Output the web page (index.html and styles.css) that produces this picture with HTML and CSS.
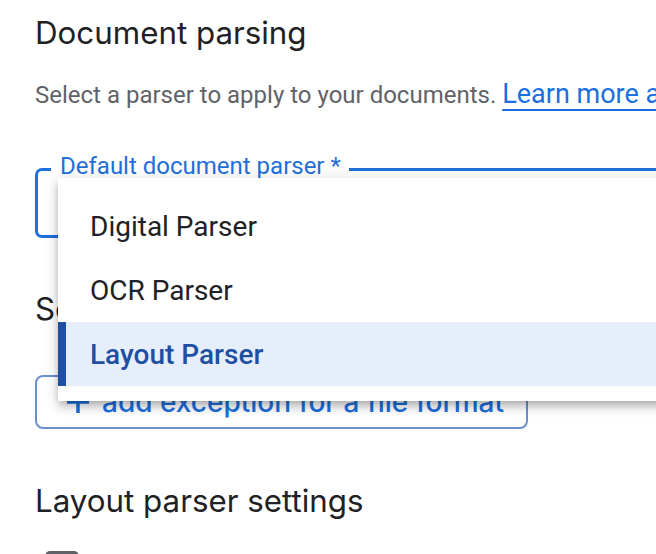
FILE: index.html
```html
<!DOCTYPE html>
<html lang="en">
<head>
<meta charset="utf-8">
<title>Document parsing</title>
<link rel="stylesheet" href="styles.css">
</head>
<body>
<main class="page">
  <h1 class="section-title">Document parsing</h1>
  <p class="desc">Select a parser to apply to your documents. <a class="link" href="#">Learn more about document parsing</a></p>

  <div class="select-wrap">
    <fieldset class="outlined">
      <legend class="float-label">Default document parser *</legend>
      <div class="select-value">Layout Parser</div>
    </fieldset>
    <ul class="menu" role="listbox">
      <li class="option" role="option">Digital Parser</li>
      <li class="option" role="option">OCR Parser</li>
      <li class="option selected" role="option" aria-selected="true">Layout Parser</li>
    </ul>
  </div>

  <h2 class="section-title sub">Set exceptions for file types</h2>
  <button class="add-btn" type="button">
    <svg class="plus" viewBox="0 0 24 24" aria-hidden="true"><path d="M12 1v22M1 12h22"/></svg>
    <span>add exception for a file format</span>
  </button>

  <h2 class="section-title settings">Layout parser settings</h2>
  <label class="check-row"><span class="checkbox"></span><span class="check-text">Include table annotation</span></label>
</main>
</body>
</html>
```
FILE: styles.css
```css
html, body {
  margin: 0;
  padding: 0;
  overflow: hidden;
  background: #ffffff;
}

body {
  font-family: Roboto, "Liberation Sans", sans-serif;
  color: #202124;
}

.page {
  padding: 15px 0 0 35px;
  width: 900px;
}

.section-title {
  margin: 0;
  font-family: Inter, "Open Sans", sans-serif;
  font-weight: 400;
  font-size: 31.3px;
  line-height: 36px;
  color: #202124;
}

.desc {
  margin: 27px 0 0;
  font-size: 24px;
  line-height: 32px;
  color: #5f6368;
  white-space: nowrap;
}

.link {
  font-size: 27px;
  color: #1a6fe0;
  text-decoration: underline;
  text-decoration-thickness: 2px;
  text-underline-offset: 6px;
}

.select-wrap {
  position: relative;
  margin-top: 43px;
}

.outlined {
  margin: 0;
  padding: 0 0 0 13px;
  width: 760px;
  border: 3px solid #1f6fdc;
  border-radius: 7px;
}

.float-label {
  padding: 0 8px 7px 9px;
  font-size: 24px;
  line-height: 24px;
  color: #1f6fdc;
}

.select-value {
  height: 50px;
  line-height: 50px;
  font-size: 28px;
  padding-left: 8px;
}

.menu {
  position: absolute;
  top: 24px;
  left: 23px;
  width: 660px;
  margin: 0;
  padding: 16px 0 15px;
  list-style: none;
  background: #ffffff;
  box-shadow: 0 3px 7px -2px rgba(0,0,0,.2), 0 7px 9px 0 rgba(0,0,0,.14), 0 2px 17px 0 rgba(0,0,0,.12);
}

.option {
  height: 63px;
  padding-top: 1px;
  line-height: 63px;
  padding-left: 32px;
  font-size: 28px;
  color: #202124;
}

.option.selected {
  background: #e6eefb;
  border-left: 8px solid #1e4fa3;
  padding-left: 24px;
  color: #1e4fa3;
  font-weight: 500;
}

.sub {
  margin-top: 53px;
}

.add-btn {
  display: flex;
  align-items: center;
  gap: 12px;
  margin-top: 48px;
  width: 493px;
  height: 54px;
  padding: 0 0 0 29px;
  background: #ffffff;
  border: 2px solid #6a90d2;
  border-radius: 8px;
  font-family: Inter, "Open Sans", sans-serif;
  font-weight: 500;
  font-size: 28px;
  color: #1a6fe0;
}

.plus {
  width: 24px;
  height: 24px;
  flex: none;
}

.plus path {
  stroke: #1a6fe0;
  stroke-width: 3.5;
  fill: none;
}

.settings {
  margin-top: 54px;
}

.check-row {
  display: flex;
  align-items: flex-start;
  gap: 20px;
  margin-top: 32px;
  margin-left: 10px;
  font-size: 24px;
}

.checkbox {
  width: 34px;
  height: 34px;
  box-sizing: border-box;
  border: 3px solid #5f6368;
  border-radius: 5px;
  flex: none;
}
```
